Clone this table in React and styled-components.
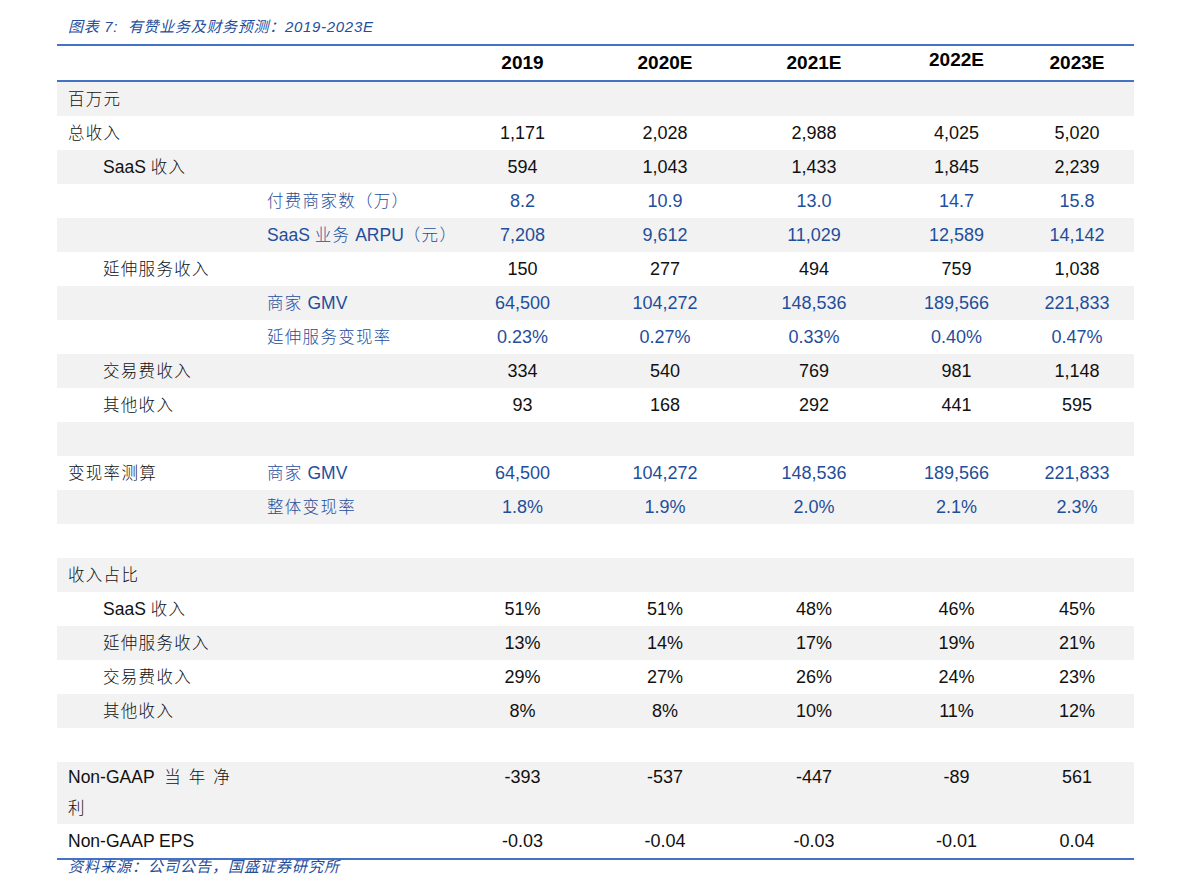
import React from 'react'
import styled, { createGlobalStyle } from 'styled-components';

const GlobalStyle = createGlobalStyle`
  html, body {
    margin: 0;
    padding: 0;
    background: #ffffff;
  }
`;

const BLUE = '#1f4e9b';
const LINE = '#4472c4';
const SHADE = '#f2f2f2';
const COLS = '173px 220px 145px 140px 158px 127px 114px';

const years = ['2019', '2020E', '2021E', '2022E', '2023E'];

const rows = [
  { label: '百万元', shade: true },
  { label: '总收入', vals: ['1,171', '2,028', '2,988', '4,025', '5,020'] },
  { label: 'SaaS 收入', indent: true, shade: true, vals: ['594', '1,043', '1,433', '1,845', '2,239'] },
  { sub: '付费商家数（万）', blue: true, vals: ['8.2', '10.9', '13.0', '14.7', '15.8'] },
  { sub: 'SaaS 业务 ARPU（元）', blue: true, shade: true, vals: ['7,208', '9,612', '11,029', '12,589', '14,142'] },
  { label: '延伸服务收入', indent: true, vals: ['150', '277', '494', '759', '1,038'] },
  { sub: '商家 GMV', blue: true, shade: true, vals: ['64,500', '104,272', '148,536', '189,566', '221,833'] },
  { sub: '延伸服务变现率', blue: true, vals: ['0.23%', '0.27%', '0.33%', '0.40%', '0.47%'] },
  { label: '交易费收入', indent: true, shade: true, vals: ['334', '540', '769', '981', '1,148'] },
  { label: '其他收入', indent: true, vals: ['93', '168', '292', '441', '595'] },
  { shade: true },
  { label: '变现率测算', sub: '商家 GMV', blue: true, vals: ['64,500', '104,272', '148,536', '189,566', '221,833'] },
  { sub: '整体变现率', blue: true, shade: true, vals: ['1.8%', '1.9%', '2.0%', '2.1%', '2.3%'] },
  {},
  { label: '收入占比', shade: true },
  { label: 'SaaS 收入', indent: true, vals: ['51%', '51%', '48%', '46%', '45%'] },
  { label: '延伸服务收入', indent: true, shade: true, vals: ['13%', '14%', '17%', '19%', '21%'] },
  { label: '交易费收入', indent: true, vals: ['29%', '27%', '26%', '24%', '23%'] },
  { label: '其他收入', indent: true, shade: true, vals: ['8%', '8%', '10%', '11%', '12%'] },
  {},
  { label: 'gaap', tall: true, shade: true, vals: ['-393', '-537', '-447', '-89', '561'] },
  { label: 'Non-GAAP EPS', vals: ['-0.03', '-0.04', '-0.03', '-0.01', '0.04'] },
];

// wrap the Chinese runs so only they get the wider spacing
function mixed(text) {
  if (!text) return null;
  return text.split(/([\u4e00-\u9fff\uff08\uff09]+)/).map((part, i) =>
    /[\u4e00-\u9fff\uff08\uff09]/.test(part) ? <Han key={i}>{part}</Han> : part
  );
}

function App() {
  return (
    <Page>
      <GlobalStyle />
      <Title>图表 7:&nbsp; 有赞业务及财务预测：2019-2023E</Title>
      <Table>
        <HeaderRow>
          <span />
          <span />
          {years.map(y => <Year key={y} $up={y === '2022E'}>{y}</Year>)}
        </HeaderRow>
        {rows.map((r, i) => (
          <Row key={i} $shade={r.shade} $tall={r.tall}>
            <Label $indent={r.indent}>
              {r.label === 'gaap'
                ? <>Non-GAAP&nbsp; <Spaced>当年净</Spaced><br /><Han>利</Han></>
                : mixed(r.label)}
            </Label>
            <SubLabel>{mixed(r.sub)}</SubLabel>
            {(r.vals || ['', '', '', '', '']).map((v, j) => (
              <Num key={j} $blue={r.blue}>{v}</Num>
            ))}
          </Row>
        ))}
      </Table>
      <Source>资料来源：公司公告，国盛证券研究所</Source>
    </Page>
  )
}

const Page = styled.div`
  width: 1077px;
  margin-left: 57px;
  padding-top: 10px;
  font-family: 'Liberation Sans', 'Noto Sans CJK SC', sans-serif;
  color: #111;
`;

const Title = styled.div`
  height: 34px;
  line-height: 34px;
  padding-left: 11px;
  font-size: 15px;
  font-style: italic;
  letter-spacing: 0.7px;
  color: ${BLUE};
`;

const Table = styled.div`
  border-top: 2px solid ${LINE};
  border-bottom: 2px solid ${LINE};
`;

const HeaderRow = styled.div`
  display: grid;
  grid-template-columns: ${COLS};
  height: 34px;
  line-height: 34px;
  border-bottom: 2px solid ${LINE};
`;

const Year = styled.div`
  text-align: center;
  font-size: 19px;
  font-weight: bold;
  color: #000;
  margin-top: ${p => (p.$up ? '-3px' : '0')};
`;

const Row = styled.div`
  display: grid;
  grid-template-columns: ${COLS};
  line-height: ${p => (p.$tall ? '31px' : '34px')};
  min-height: 34px;
  background: ${p => (p.$shade ? SHADE : '#ffffff')};
  font-size: 17.5px;
`;

const Han = styled.span`
  font-size: 16.5px;
  font-weight: 300;
  letter-spacing: 1.3px;
`;

const Label = styled.div`
  padding-left: ${p => (p.$indent ? '46px' : '11px')};
  white-space: nowrap;
`;

const Spaced = styled(Han)`
  letter-spacing: 8px;
`;

const SubLabel = styled.div`
  padding-left: 37px;
  color: ${BLUE};
  white-space: nowrap;
`;

const Num = styled.div`
  text-align: center;
  font-size: 18px;
  color: ${p => (p.$blue ? BLUE : '#111')};
`;

const Source = styled.div`
  padding-left: 11px;
  line-height: 14px;
  font-size: 15px;
  font-style: italic;
  letter-spacing: 1px;
  color: ${BLUE};
`;

export default App
